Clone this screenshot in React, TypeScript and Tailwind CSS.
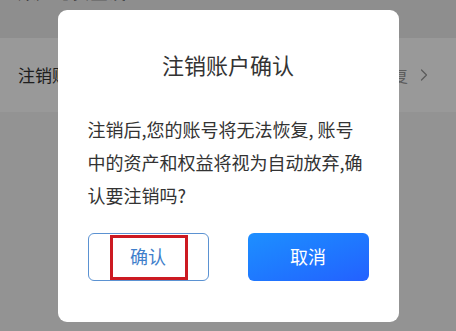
import { ChevronRight } from 'lucide-react';

const FONT = { fontFamily: '"Noto Sans CJK SC", "Noto Sans", sans-serif' };

export default function App() {
  return (
    <div className="relative h-[331px] w-[456px] overflow-hidden bg-[#f5f5f5]" style={FONT}>
      {/* page underneath */}
      <div className="h-[38px] overflow-hidden bg-[#ededed]">
        <div className="-mt-[21px] pl-[18px] text-[18px] leading-[24px] text-[#333]">账户与安全设置</div>
      </div>
      <div className="flex h-[74px] items-center justify-between bg-white pl-[18px] pr-[22px]">
        <span className="text-[17px] text-[#333]">注销账户</span>
        <div className="flex items-center gap-[6px] text-[16px] text-[#999]">
          <span>注销后不可恢复</span>
          <ChevronRight size={20} strokeWidth={1.5} />
        </div>
      </div>

      {/* overlay */}
      <div className="absolute inset-0 bg-black/40" />

      {/* dialog */}
      <div className="absolute inset-0 flex items-center justify-center">
        <div className="h-[312px] w-[341px] rounded-[9px] bg-white px-[30px] pt-[39px]">
          <h2 className="text-center text-[22px] leading-[30px] text-[#333]">注销账户确认</h2>
          <div className="mt-[34px] text-[18px] leading-[33px] text-[#333]">
            <div>注销后,您的账号将无法恢复, 账号</div>
            <div>中的资产和权益将视为自动放弃,确</div>
            <div>认要注销吗?</div>
          </div>
          <div className="mt-[21px] flex justify-between">
            <button className="relative h-[48px] w-[121px] rounded-[6px] border border-[#5b92d2] text-[18px] text-[#3f7fcb]">
              确认
              <span className="absolute left-[21px] top-[1px] h-[45px] w-[78px] border-[3px] border-[#cc1a22]" />
            </button>
            <button className="h-[48px] w-[121px] rounded-[6px] bg-gradient-to-br from-[#1e8fff] to-[#2460ff] text-[18px] text-white">
              取消
            </button>
          </div>
        </div>
      </div>
    </div>
  );
}
